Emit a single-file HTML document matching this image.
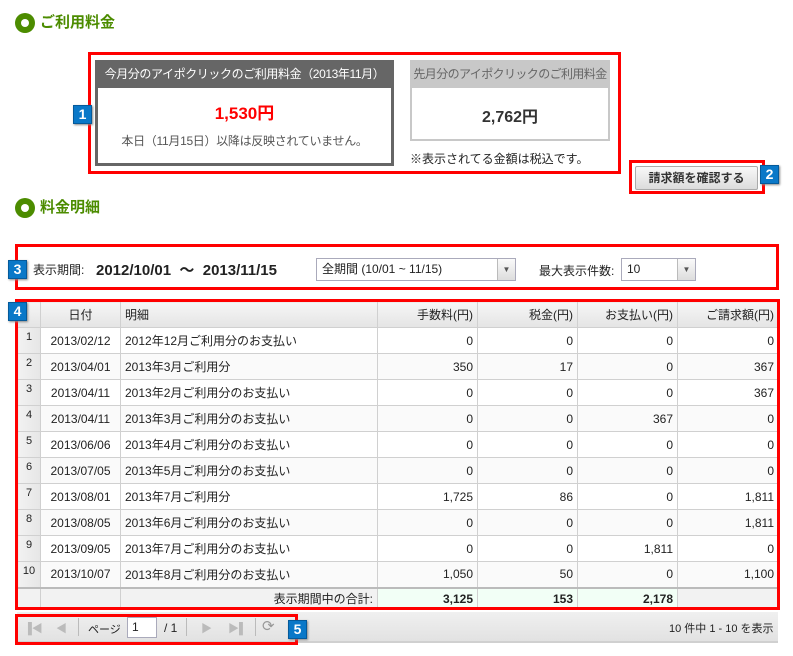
<!DOCTYPE html>
<html><head><meta charset="utf-8"><style>
*{box-sizing:border-box;margin:0;padding:0}
body{width:793px;height:656px;background:#fff;position:relative;font-family:"Liberation Sans","Noto Sans CJK JP",sans-serif;font-size:12px;color:#222;overflow:hidden}
.abs{position:absolute}
.ttl{position:absolute;left:15px;font-size:15px;font-weight:bold;color:#4c8c00;line-height:20px}
.ttl i{display:inline-block;width:20px;height:20px;border-radius:50%;background:#4c8c00;vertical-align:top;position:relative;margin-right:5px}
.ttl i:after{content:"";position:absolute;left:6px;top:6px;width:8px;height:8px;border-radius:50%;background:#fff}
.red{position:absolute;border:3px solid #f00}
.badge{position:absolute;width:19px;height:19px;background:#0a78c8;border:1px solid #055a9a;color:#fff;font-weight:bold;font-size:14px;text-align:center;line-height:17px;box-shadow:1px 1px 2px #888}
table{border-collapse:collapse;position:absolute;left:17px;top:301px;width:761px;table-layout:fixed}
td,th{border:1px solid #d0d0d0;height:26px;padding:0 4px;font-weight:normal;font-size:12px;white-space:nowrap}
th{background:linear-gradient(#f6f6f6,#e4e4e4);height:26px}
td.n{background:linear-gradient(90deg,#f2f2f2,#e6e6e6);text-align:center;font-size:11px;vertical-align:top;padding-top:3px}
tr.e td{background:#fafafa}
tr.e td.n{background:linear-gradient(90deg,#f2f2f2,#e6e6e6)}
.r{text-align:right}
.c{text-align:center}
tr.t td{height:22px;font-weight:bold;border-top:2px solid #bbb}
.sel{position:absolute;height:23px;border:1px solid #aab;background:#fff;font-size:12px;line-height:21px;padding-left:5px}
.sel b{position:absolute;right:0;top:0;width:18px;height:21px;background:linear-gradient(#fafafa,#ddd);border-left:1px solid #bbb;font-weight:normal;font-size:8px;text-align:center;line-height:21px;color:#555}
.hd{white-space:nowrap;letter-spacing:-0.4px;font-size:12px;overflow:hidden}
</style></head><body>
<div class="ttl" style="top:13px"><i></i>ご利用料金</div>
<div class="red" style="left:88px;top:52px;width:533px;height:122px"></div>
<div class="badge" style="left:73px;top:105px">1</div>
<div class="abs" style="left:95px;top:60px;width:299px;height:106px;border:3px solid #666;border-top:0;background:#fff">
 <div class="hd" style="background:#666;color:#fff;height:28px;line-height:28px;text-align:center;margin:0 -3px">今月分のアイポクリックのご利用料金（2013年11月）</div>
 <div style="text-align:center;color:#f00;font-weight:bold;font-size:17px;margin-top:16px;line-height:20px">1,530円</div>
 <div style="text-align:center;color:#555;margin-top:8px;white-space:nowrap;letter-spacing:-0.3px">本日（11月15日）以降は反映されていません。</div>
</div>
<div class="abs" style="left:410px;top:60px;width:200px;height:81px;border:2px solid #c8c8c8;border-top:0">
 <div class="hd" style="background:#c8c8c8;color:#666;height:28px;line-height:28px;text-align:center;margin:0 -2px;letter-spacing:-0.6px">先月分のアイポクリックのご利用料金</div>
 <div style="text-align:center;font-weight:bold;font-size:16px;margin-top:15px;color:#333">2,762円</div>
</div>
<div class="abs" style="left:410px;top:150px">※表示されてる金額は税込です。</div>
<div class="red" style="left:629px;top:160px;width:136px;height:34px"></div>
<div class="abs" style="left:635px;top:166px;width:123px;height:24px;border:1px solid #aaa;border-radius:2px;background:linear-gradient(#f8f8f8,#dcdcdc);text-align:center;line-height:22px;font-weight:bold;font-size:12px;color:#333">請求額を確認する</div>
<div class="badge" style="left:760px;top:165px">2</div>
<div class="ttl" style="top:198px"><i></i>料金明細</div>
<div class="red" style="left:15px;top:244px;width:764px;height:46px"></div>
<div class="badge" style="left:8px;top:260px">3</div>
<div class="abs" style="left:33px;top:261px">表示期間:</div>
<div class="abs" style="left:96px;top:259px;font-weight:bold;font-size:15px">2012/10/01 &nbsp;～ &nbsp;2013/11/15</div>
<div class="sel" style="left:316px;top:258px;width:200px">全期間 (10/01 ~ 11/15)<b>▼</b></div>
<div class="abs" style="left:539px;top:262px">最大表示件数:</div>
<div class="sel" style="left:621px;top:258px;width:75px">10<b>▼</b></div>
<table>
<colgroup><col style="width:23px"><col style="width:80px"><col style="width:257px"><col style="width:100px"><col style="width:100px"><col style="width:100px"><col style="width:101px"></colgroup>
<tr><th></th><th class="c">日付</th><th style="text-align:left">明細</th><th class="r">手数料(円)</th><th class="r">税金(円)</th><th class="r">お支払い(円)</th><th class="r">ご請求額(円)</th></tr>
<tr><td class="n">1</td><td class="c">2013/02/12</td><td>2012年12月ご利用分のお支払い</td><td class="r">0</td><td class="r">0</td><td class="r">0</td><td class="r">0</td></tr>
<tr class="e"><td class="n">2</td><td class="c">2013/04/01</td><td>2013年3月ご利用分</td><td class="r">350</td><td class="r">17</td><td class="r">0</td><td class="r">367</td></tr>
<tr><td class="n">3</td><td class="c">2013/04/11</td><td>2013年2月ご利用分のお支払い</td><td class="r">0</td><td class="r">0</td><td class="r">0</td><td class="r">367</td></tr>
<tr class="e"><td class="n">4</td><td class="c">2013/04/11</td><td>2013年3月ご利用分のお支払い</td><td class="r">0</td><td class="r">0</td><td class="r">367</td><td class="r">0</td></tr>
<tr><td class="n">5</td><td class="c">2013/06/06</td><td>2013年4月ご利用分のお支払い</td><td class="r">0</td><td class="r">0</td><td class="r">0</td><td class="r">0</td></tr>
<tr class="e"><td class="n">6</td><td class="c">2013/07/05</td><td>2013年5月ご利用分のお支払い</td><td class="r">0</td><td class="r">0</td><td class="r">0</td><td class="r">0</td></tr>
<tr><td class="n">7</td><td class="c">2013/08/01</td><td>2013年7月ご利用分</td><td class="r">1,725</td><td class="r">86</td><td class="r">0</td><td class="r">1,811</td></tr>
<tr class="e"><td class="n">8</td><td class="c">2013/08/05</td><td>2013年6月ご利用分のお支払い</td><td class="r">0</td><td class="r">0</td><td class="r">0</td><td class="r">1,811</td></tr>
<tr><td class="n">9</td><td class="c">2013/09/05</td><td>2013年7月ご利用分のお支払い</td><td class="r">0</td><td class="r">0</td><td class="r">1,811</td><td class="r">0</td></tr>
<tr class="e"><td class="n">10</td><td class="c">2013/10/07</td><td>2013年8月ご利用分のお支払い</td><td class="r">1,050</td><td class="r">50</td><td class="r">0</td><td class="r">1,100</td></tr>
<tr class="t"><td style="background:#f2f2f2"></td><td style="background:#f2f2f2"></td><td class="r" style="background:#f2f2f2;font-weight:normal">表示期間中の合計:</td><td class="r" style="background:#f2fff6">3,125</td><td class="r" style="background:#f2fff6">153</td><td class="r" style="background:#f2fff6">2,178</td><td style="background:#f2f2f2"></td></tr>
</table>
<div class="red" style="left:15px;top:299px;width:765px;height:311px"></div>
<div class="badge" style="left:8px;top:302px">4</div>
<div class="abs" style="left:17px;top:612px;width:761px;height:31px;background:linear-gradient(#f0f0f0,#e2e2e2);border-bottom:2px solid #d0d0d0"></div>
<div class="abs" style="left:24px;top:620px;color:#bbb;font-size:11px">▐◀</div>
<div class="abs" style="left:56px;top:620px;color:#bbb;font-size:11px">◀</div>
<div class="abs" style="left:78px;top:618px;width:1px;height:18px;background:#bbb"></div>
<div class="abs" style="left:88px;top:621px;font-size:11px">ページ</div>
<div class="abs" style="left:127px;top:617px;width:30px;height:21px;border:1px solid #aab;background:#fff;padding-left:4px;line-height:19px">1</div>
<div class="abs" style="left:164px;top:621px">/ 1</div>
<div class="abs" style="left:186px;top:618px;width:1px;height:18px;background:#bbb"></div>
<div class="abs" style="left:201px;top:620px;color:#bbb;font-size:11px">▶</div>
<div class="abs" style="left:228px;top:620px;color:#bbb;font-size:11px">▶▌</div>
<div class="abs" style="left:255px;top:618px;width:1px;height:18px;background:#bbb"></div>
<div class="abs" style="left:262px;top:617px;color:#999;font-size:15px">⟳</div>
<div class="red" style="left:15px;top:614px;width:283px;height:31px"></div>
<div class="badge" style="left:288px;top:620px">5</div>
<div class="abs" style="left:669px;top:620px;font-size:11px">10 件中 1 - 10 を表示</div>
</body></html>
